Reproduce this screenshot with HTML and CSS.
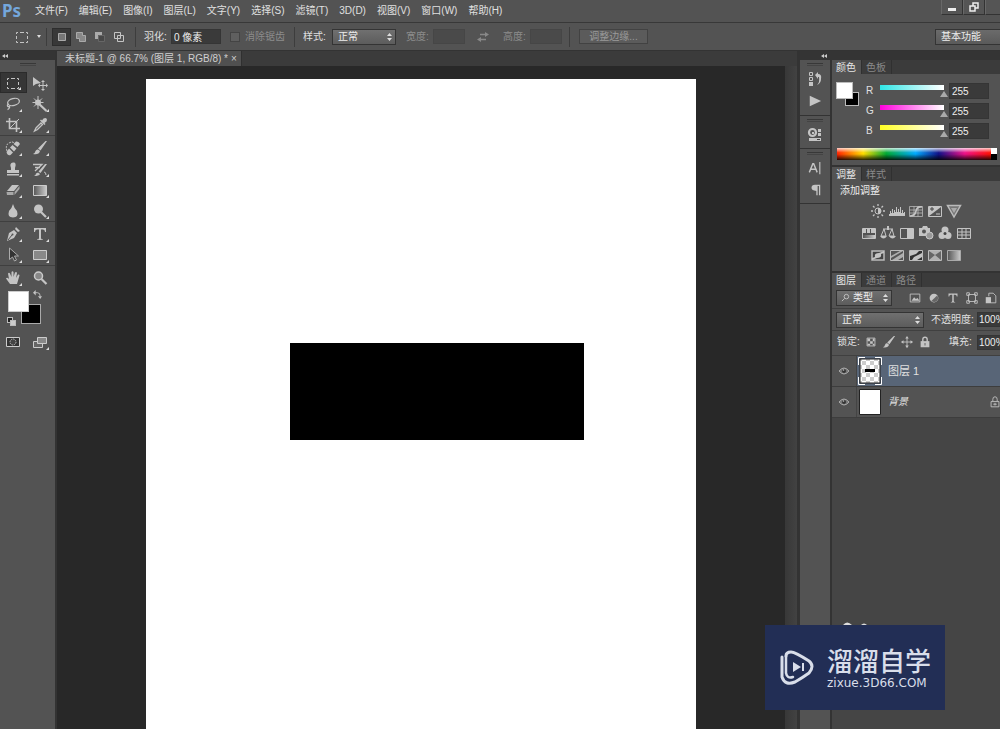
FILE: index.html
```html
<!DOCTYPE html>
<html lang="zh-CN">
<head>
<meta charset="utf-8">
<meta name="viewport" content="width=device-width, initial-scale=1">
<title>未标题-1</title>
<link rel="stylesheet" href="styles.css">
</head>
<body>
<svg class="sprite" aria-hidden="true">
  <defs>
    <linearGradient id="fadeBack"><stop offset="0" stop-color="#555"/><stop offset="1" stop-color="#ccc"/></linearGradient>
    <pattern id="checker" width="8" height="8" patternUnits="userSpaceOnUse"><path fill="#fff" d="M0 0h8v8H0z"/><path fill="#ccc" d="M0 0h4v4H0zM4 4h4v4H4z"/></pattern>
  </defs>
  <symbol id="corner" viewBox="0 0 4 4"><path fill="#ddd" d="M4 0v4H0z"/></symbol>
  <symbol id="updown" viewBox="0 0 5 8"><path d="M2.500 0 5 3H0zM0 5h5L2.500 8z" fill="#ddd"/></symbol>
  <symbol id="marquee" viewBox="0 0 16 16"><path d="M2.500 5V3.500H4M6 3.500h4M12 3.500h1.500V5M13.500 7v3M13.500 12v1.500H12M10 13.500H6M4 13.500H2.500V12M2.500 10V7" class="ln"/></symbol>
  <symbol id="move" viewBox="0 0 16 16"><path d="M1 2v9l3-2 5-1z"/><path d="M11 6.500v8M7 10.500h8" class="ln"/><path d="m11 5 2 2H9zM11 16l2-2H9zM6 10.500l2-2v4zM16 10.500l-2-2v4z"/></symbol>
  <symbol id="lasso" viewBox="0 0 16 16"><ellipse cx="8.500" cy="6" rx="6" ry="3.500" transform="rotate(-14 8.500 6)" class="ln bold"/><path d="M3.500 8c-2 1-1 3 .5 2.500s0 3-1.500 3" class="ln bold"/></symbol>
  <symbol id="wand" viewBox="0 0 16 16"><path d="m6 7 8.500 8" class="ln fat"/><path d="M6 0v13M.5 6.500h11M2 2.500l8 8M10 2.500l-8 8" class="ln"/><circle cx="6" cy="6.500" r="3"/></symbol>
  <symbol id="crop" viewBox="0 0 16 16"><path d="M4.500 1v10.500H15M1 4.500h10.500V15" class="ln two"/><path d="m5 11 9-9" class="ln"/></symbol>
  <symbol id="dropper" viewBox="0 0 16 16"><path d="M2.500 14 4 11l5-5 1.500 1.500-5 5z" class="ln bold"/><path d="m8 3.500 1-1 1 1 1.500-2q2-1 3 0t0 3l-2 1.500 1 1-1 1z"/></symbol>
  <symbol id="heal" viewBox="0 0 16 16"><path d="M8.500 4 11 1.500q3-.5 4 2.500l-2.500 3zM5 7.500 7.500 5l4 3.500-2.500 3zM1.500 12 4 8.500l4 4L5.500 15q-3 1-4-3z"/><path d="M2 11Q0 5 4 3t5 0" class="ln" stroke-dasharray="2 1"/></symbol>
  <symbol id="brush" viewBox="0 0 16 16"><path d="M15 1 8.500 10.500 6 8.500 13.500 1zM8 11q-1 4-7 3 2-.5 2.500-3 1-2 2.500-1.500z"/></symbol>
  <symbol id="stamp" viewBox="0 0 16 16"><path d="M6 7Q4 2 8 1.500T10 7v2h4v3H2V9h4zM2 13h12v1.500H2z"/></symbol>
  <symbol id="history" viewBox="0 0 16 16"><path d="M15 3 8.500 12l-2-1.500L13 3zM8 13q-1 2-6 2 2-1 2-2.500l2-1z"/><path d="M1 3.500h9L3 10M3 6.500h5" class="ln bold"/><path d="M12 11q2 0 2 3" class="ln"/></symbol>
  <symbol id="eraser" viewBox="0 0 16 16"><path d="M7 3h7l-5 6H2z"/><path d="M1.500 10h7v3H2zM9.500 10 14.500 4v3l-5 6z" opacity=".75"/></symbol>
  <symbol id="gradient" viewBox="0 0 16 16"><path d="M1.500 3.500h13v10h-13z" fill="url(#fadeBack)" stroke="#ccc"/></symbol>
  <symbol id="drop" viewBox="0 0 16 16"><path d="M8 1q1 4 4 7 2 6.500-4 6.500T4 8Q7 5 8 1"/></symbol>
  <symbol id="dodge" viewBox="0 0 16 16"><circle cx="6.500" cy="6" r="4.500"/><path d="m9 9 5 5" class="ln fat"/></symbol>
  <symbol id="pen" viewBox="0 0 16 16"><path d="m2 15 2-8 5-3 3 3-3 5zM10 3l1-2 4 4-2 1z"/><path d="m3 14 4-5" stroke="#535353"/><circle cx="7.500" cy="8.500" r="1" fill="#535353"/></symbol>
  <symbol id="type" viewBox="0 0 16 16"><path d="M2 2h12v4h-1q0-2.500-2-2.500H9V12q0 1.500 2 1.500v.5H5v-.5q2 0 2-1.500V3.500H5Q3 3.500 3 6H2z"/></symbol>
  <symbol id="arrow" viewBox="0 0 16 16"><path d="M4.500 1v11.500l3-2.500 2 4 2-1-2-4h4z" fill="#333" stroke="#aaa"/></symbol>
  <symbol id="rect" viewBox="0 0 16 16"><path d="M1.500 3.500h13v9h-13z" fill="#888" stroke="#ccc"/></symbol>
  <symbol id="hand" viewBox="0 0 16 16"><path d="M5 14 1 8.500q1-1.500 3 .5L3 3.500q1-1.500 2 0L6.500 7 6.500 2q1-1.500 2 0V7L10 2.500q1.500-1 2 .5l-1 5 2-3.500q1.500-.5 1.500 1L12 14z"/></symbol>
  <symbol id="zoom" viewBox="0 0 16 16"><circle cx="6.500" cy="6" r="4" fill="#888" stroke="#ccc" stroke-width="1.500"/><path d="m9.500 9 5 5" class="ln fat"/></symbol>
  <symbol id="swap" viewBox="0 0 10 10"><path d="M2 3h3q3 0 3 4" class="ln"/><path d="M0 3l3-3v6zM8 10 5.500 7h4.500z"/></symbol>
  <symbol id="mask" viewBox="0 0 16 16"><path d="M1.500 3.500h13v9h-13z" fill="#333" stroke="#ccc"/><circle cx="8" cy="8" r="3" fill="#444" stroke="#bbb" stroke-dasharray="1.500 .8"/></symbol>
  <symbol id="screens" viewBox="0 0 16 16"><path d="M1.500 7.500h9v6h-9z" fill="#666" stroke="#ccc"/><path d="M5.500 3.500h9v6h-9z" fill="#888" stroke="#ccc"/></symbol>
  <symbol id="selnew" viewBox="0 0 12 12"><path d="M2.500 2.500h7v7h-7z" fill="#777" stroke="#aaa"/></symbol>
  <symbol id="seladd" viewBox="0 0 12 12"><path d="M1.500 1.500h6v3h3v6h-6v-3h-3z" fill="#888" stroke="#aaa"/></symbol>
  <symbol id="selsub" viewBox="0 0 12 12"><path d="M1 8V1h7v3H4v4z" fill="#aaa"/><path d="M4.500 10.500v-6h6v6z" fill="#484848" stroke="#666"/></symbol>
  <symbol id="selint" viewBox="0 0 12 12"><path d="M1.500 1.500h6v6h-6zM4.500 4.500h6v6h-6z" class="ln"/></symbol>
  <symbol id="exchange" viewBox="0 0 12 12"><path d="M3 8.500h6M3 3.500h6" stroke="#888" stroke-width="1.500"/><path d="M8 1v5l4-2.500zM4 6v5L0 8.500z" fill="#888"/></symbol>
  <symbol id="minimize" viewBox="0 0 12 12"><path d="M2 7h8v3H2z" fill="#eee"/></symbol>
  <symbol id="restore" viewBox="0 0 12 12"><path d="M5 5V2h5v5H7M2 5h5v5H2z" fill="none" stroke="#eee" stroke-width="1.500"/></symbol>
  <symbol id="actions" viewBox="0 0 16 16"><path d="M2.500 1.500h3v3h-3zM2.500 6.500h3v3h-3z" class="ln"/><path d="M2 11h4v4H2zM8 4l3-3v2q4 0 3 5 0 4-4 6 3-3 2-8h-1v2z"/></symbol>
  <symbol id="play" viewBox="0 0 16 16"><path d="M2 2v12l13-6z"/></symbol>
  <symbol id="props" viewBox="0 0 16 16"><circle cx="5.500" cy="5.500" r="3.500" class="ln fat"/><path d="M5 5h2v2H5zM11 2h3v3h-3zM11 6h3v3h-3zM2 11h12v3H2z"/><path d="M10 12h3v1h-3z" fill="#444"/></symbol>
  <symbol id="chara" viewBox="0 0 16 16"><path d="m1.500 13 4-10h1l4 10M3 9.500h6" class="ln two"/><path d="M13.500 1v14" class="ln bold"/></symbol>
  <symbol id="para" viewBox="0 0 16 16"><path d="M8 2h6v12h-1.500V3.500H11V14H9.500V9Q4 9 4 5.500T8 2"/></symbol>
  <symbol id="sun" viewBox="0 0 16 16"><circle cx="8" cy="8" r="3" class="ln"/><path d="M8 5a3 3 0 0 1 0 6z"/><path d="M8 1v2M8 13v2M1 8h2M13 8h2M3 3l1.500 1.500M11.500 11.500 13 13M13 3l-1.500 1.500M4.500 11.500 3 13" class="ln bold"/></symbol>
  <symbol id="levels" viewBox="0 0 16 16"><path d="M0 13h16v-4h-1v1h-1V7h-1v3h-1V4h-1v5h-1V6H9v3H8V4H7v5H6V7H5v3H4V6H3v4H2V8H1v3H0z"/></symbol>
  <symbol id="curves" viewBox="0 0 16 16"><path d="M1.500 3.500h13v10h-13zM1.500 7h13M1.500 10h13M6 3.500v10M10 3.500v10" class="ln thin"/><path d="M2 13q5 0 6-5t6-4" class="ln two"/></symbol>
  <symbol id="exposure" viewBox="0 0 16 16"><path d="M1.500 3.500h13v10h-13z" class="ln"/><path d="M2 13V4h12z"/><path d="M3 6h4M5 4v4" stroke="#444"/><path d="M9 11h4" class="ln"/></symbol>
  <symbol id="vibrance" viewBox="0 0 16 16"><path d="M1.500 2.500h13L8 14z" fill="#777" stroke="#bbb" stroke-width="1.500"/><path d="M5 5h6l-3 5z" fill="#aaa"/></symbol>
  <symbol id="hue" viewBox="0 0 16 16"><path d="M1.500 3.500h13v10h-13z" class="ln"/><path d="M2 4h3v4H2zM6 4h3v4H6zM10 4h4v4h-4z"/><path d="M2 10h12v3H2z" fill="url(#fadeBack)"/></symbol>
  <symbol id="balance" viewBox="0 0 16 16"><path d="M3 4h10M4 4l-3 7h5zM12 4l-3 7h5z" class="ln"/><path d="M0 11h7q-3.500 5-7 0M9 11h7q-3.500 5-7 0M7 1h2v4H7z"/></symbol>
  <symbol id="bw" viewBox="0 0 16 16"><path d="M1.500 3.500h13v10h-13z" class="ln"/><path d="M8 4h6v9H8z"/></symbol>
  <symbol id="photo" viewBox="0 0 16 16"><path d="M1 3h3l1-2h4l1 2h2v4q-4 0-4 4H1z"/><circle cx="6" cy="6.500" r="2" fill="#555"/><circle cx="11.500" cy="10.500" r="3.500" fill="#999" stroke="#ccc"/></symbol>
  <symbol id="mixer" viewBox="0 0 16 16"><circle cx="8" cy="5" r="3.500"/><circle cx="5" cy="10.500" r="3.500"/><circle cx="11" cy="10.500" r="3.500"/><circle cx="8" cy="8.500" r="1.500" fill="#444"/></symbol>
  <symbol id="lut" viewBox="0 0 16 16"><path d="M1.500 3.500h13v10h-13zM1.500 7h13M1.500 10h13M6 3.500v10M10 3.500v10" class="ln"/></symbol>
  <symbol id="invert" viewBox="0 0 16 16"><path d="M2 4h12v9H2z" fill="#444" stroke="#bbb" stroke-width="1.500"/><path d="M2 13v-2l3-1q-1-4 4-4l5-2v2l-3 1q1 4-4 4z"/></symbol>
  <symbol id="poster" viewBox="0 0 16 16"><path d="M1.500 3.500h13v10h-13z" fill="#555" stroke="#bbb"/><path d="m2 9 9-5h3L2 11zM3 13l11-7v4l-5 3z" opacity=".8"/></symbol>
  <symbol id="thresh" viewBox="0 0 16 16"><path d="M1.500 3.500h13v10h-13z" fill="#333" stroke="#bbb"/><path d="M2 4h9L8 7 2 9zM4 13l2-3 8-4v4l-5 3z"/></symbol>
  <symbol id="selective" viewBox="0 0 16 16"><path d="M1.500 3.500h13v10h-13z" fill="#666" stroke="#bbb"/><path d="m2 4 6 4 6-4zM2 13l6-5 6 5z" opacity=".8"/></symbol>
  <symbol id="gmap" viewBox="0 0 16 16"><path d="M1.500 3.500h13v10h-13z" fill="url(#fadeBack)" stroke="#aaa"/></symbol>
  <symbol id="find" viewBox="0 0 10 10"><circle cx="6" cy="4" r="2.500" class="ln"/><path d="M4 6 1 9" class="ln"/></symbol>
  <symbol id="image" viewBox="0 0 16 16"><path d="M2.500 3.500h11v9h-11z" class="ln"/><path d="m4 11 3-4 2 2 2-1 2 3z"/></symbol>
  <symbol id="adjust" viewBox="0 0 16 16"><circle cx="8" cy="8" r="5"/><path d="M11.500 5 5 11.500q4 2.500 6.500-.5t0-6" fill="#666"/></symbol>
  <symbol id="shape" viewBox="0 0 16 16"><path d="M4 4h8v8H4zM2 2h3v3H2zM11 2h3v3h-3zM2 11h3v3H2zM11 11h3v3h-3z" class="ln"/></symbol>
  <symbol id="smart" viewBox="0 0 16 16"><path d="M5.500 6V2.500h5l3 3v8H8" class="ln"/><path d="M2 7h6v7H2z"/></symbol>
  <symbol id="pixels" viewBox="0 0 16 16"><path d="M3.500 3.500h9v9h-9z" class="ln"/><path d="M4 4h3v3H4zM10 4h2v3h-2zM7 7h3v3H7zM4 10h3v2H4zM10 10h2v2h-2z"/></symbol>
  <symbol id="position" viewBox="0 0 16 16"><path d="M8 3v10M3 8h10" class="ln"/><path d="m8 1 2 3H6zM8 15l2-3H6zM1 8l3-2v4zM15 8l-3-2v4z"/></symbol>
  <symbol id="lock" viewBox="0 0 16 16"><path d="M5.500 8V5q0-2.500 2.500-2.500T10.500 5v3" class="ln two"/><path d="M3 7h10v7H3z"/><path d="M7.500 9h1v3h-1z" fill="#555"/></symbol>
  <symbol id="lockline" viewBox="0 0 16 16"><path d="M5.500 7V5q0-3 2.500-3t2.500 3v2M3.500 7.500h9v6h-9zM8 9v3M6 10.500h4" class="ln"/></symbol>
  <symbol id="eye" viewBox="0 0 12 12"><path d="M1 6q5-6 10 0-5 6-10 0" fill="#777" stroke="#aaa"/><circle cx="6" cy="6" r="2" fill="#333"/><circle cx="5.500" cy="5" r=".8"/></symbol>
</svg>

<header class="menubar">
  <span class="logo">Ps</span>
  <nav class="menus" aria-label="主菜单">
    <button>文件(F)</button><button>编辑(E)</button><button>图像(I)</button><button>图层(L)</button><button>文字(Y)</button><button>选择(S)</button><button>滤镜(T)</button><button>3D(D)</button><button>视图(V)</button><button>窗口(W)</button><button>帮助(H)</button>
  </nav>
  <div class="window-buttons">
    <button aria-label="最小化"><svg class="i12"><use href="#minimize"/></svg></button>
    <button aria-label="还原"><svg class="i12"><use href="#restore"/></svg></button>
    <button aria-label="关闭"></button>
  </div>
</header>

<section class="options" aria-label="选项">
  <button class="preset" aria-label="矩形选框"><svg class="i16"><use href="#marquee"/></svg><i class="caret"></i></button>
  <div class="modes">
    <button class="on" aria-label="新选区"><svg class="i12"><use href="#selnew"/></svg></button>
    <button aria-label="添加到选区"><svg class="i12"><use href="#seladd"/></svg></button>
    <button aria-label="从选区减去"><svg class="i12"><use href="#selsub"/></svg></button>
    <button aria-label="与选区交叉"><svg class="i12"><use href="#selint"/></svg></button>
  </div>
  <div class="group feather"><label for="feather">羽化:</label><input id="feather" class="field" value="0 像素"></div>
  <label class="check"><input type="checkbox" disabled><span>消除锯齿</span></label>
  <div class="group style"><label for="style">样式:</label>
    <span class="pick"><select id="style"><option>正常</option></select><svg class="ud"><use href="#updown"/></svg></span></div>
  <div class="group dim"><label for="w">宽度:</label><input id="w" class="field" disabled></div>
  <button class="swapwh" aria-label="交换宽度和高度"><svg class="i12"><use href="#exchange"/></svg></button>
  <div class="group dim"><label for="h">高度:</label><input id="h" class="field" disabled></div>
  <div class="refine"><button disabled>调整边缘...</button></div>
  <button class="workspace">基本功能</button>
</section>

<main class="work">
  <aside class="tools">
    <div class="collapse"><i></i><i></i></div>
    <div class="toolbox">
      <div class="grip"></div>
      <div class="tool-group">
        <button class="on" aria-label="矩形选框工具"><svg class="i16"><use href="#marquee"/></svg><svg class="more"><use href="#corner"/></svg></button>
        <button aria-label="移动工具"><svg class="i16"><use href="#move"/></svg></button>
        <button aria-label="套索工具"><svg class="i16"><use href="#lasso"/></svg><svg class="more"><use href="#corner"/></svg></button>
        <button aria-label="魔棒工具"><svg class="i16"><use href="#wand"/></svg><svg class="more"><use href="#corner"/></svg></button>
        <button aria-label="裁剪工具"><svg class="i16"><use href="#crop"/></svg><svg class="more"><use href="#corner"/></svg></button>
        <button aria-label="吸管工具"><svg class="i16"><use href="#dropper"/></svg><svg class="more"><use href="#corner"/></svg></button>
      </div>
      <div class="tool-group">
        <button aria-label="污点修复画笔工具"><svg class="i16"><use href="#heal"/></svg><svg class="more"><use href="#corner"/></svg></button>
        <button aria-label="画笔工具"><svg class="i16"><use href="#brush"/></svg><svg class="more"><use href="#corner"/></svg></button>
        <button aria-label="仿制图章工具"><svg class="i16"><use href="#stamp"/></svg><svg class="more"><use href="#corner"/></svg></button>
        <button aria-label="历史记录画笔工具"><svg class="i16"><use href="#history"/></svg><svg class="more"><use href="#corner"/></svg></button>
        <button aria-label="橡皮擦工具"><svg class="i16"><use href="#eraser"/></svg><svg class="more"><use href="#corner"/></svg></button>
        <button aria-label="渐变工具"><svg class="i16"><use href="#gradient"/></svg><svg class="more"><use href="#corner"/></svg></button>
        <button aria-label="模糊工具"><svg class="i16"><use href="#drop"/></svg><svg class="more"><use href="#corner"/></svg></button>
        <button aria-label="减淡工具"><svg class="i16"><use href="#dodge"/></svg><svg class="more"><use href="#corner"/></svg></button>
      </div>
      <div class="tool-group">
        <button aria-label="钢笔工具"><svg class="i16"><use href="#pen"/></svg><svg class="more"><use href="#corner"/></svg></button>
        <button aria-label="文字工具"><svg class="i16"><use href="#type"/></svg><svg class="more"><use href="#corner"/></svg></button>
        <button aria-label="路径选择工具"><svg class="i16"><use href="#arrow"/></svg><svg class="more"><use href="#corner"/></svg></button>
        <button aria-label="矩形工具"><svg class="i16"><use href="#rect"/></svg><svg class="more"><use href="#corner"/></svg></button>
      </div>
      <div class="tool-group plain">
        <button aria-label="抓手工具"><svg class="i16"><use href="#hand"/></svg><svg class="more"><use href="#corner"/></svg></button>
        <button aria-label="缩放工具"><svg class="i16"><use href="#zoom"/></svg></button>
      </div>
      <div class="swatches">
        <button class="back" aria-label="背景色"></button>
        <button class="fore" aria-label="前景色"></button>
        <button class="reset" aria-label="默认颜色"><i></i><i></i></button>
        <button class="flip" aria-label="切换颜色"><svg><use href="#swap"/></svg></button>
      </div>
      <div class="tool-group plain">
        <button aria-label="快速蒙版"><svg class="i16"><use href="#mask"/></svg></button>
        <button aria-label="屏幕模式"><svg class="i16"><use href="#screens"/></svg><svg class="more"><use href="#corner"/></svg></button>
      </div>
    </div>
  </aside>

  <section class="document">
    <div class="tabs"><div class="doc-tab"><span>未标题-1 @ 66.7% (图层 1, RGB/8) *</span><button aria-label="关闭">×</button></div></div>
    <div class="view">
      <div class="stage"><div class="paper"><div class="block"></div></div></div>
      <div class="scroll"></div>
    </div>
  </section>

  <section class="dock">
    <div class="collapse"><i></i><i></i></div>
    <div class="dock-body">
      <aside class="strip">
        <div class="strip-group first"><div class="grip"></div>
          <button aria-label="历史记录"><svg class="i16"><use href="#actions"/></svg></button>
          <button aria-label="动作"><svg class="i14"><use href="#play"/></svg></button></div>
        <div class="strip-group single"><div class="grip"></div>
          <button aria-label="属性"><svg class="i16"><use href="#props"/></svg></button></div>
        <div class="strip-group"><div class="grip"></div>
          <button aria-label="字符"><svg class="i14"><use href="#chara"/></svg></button>
          <button aria-label="段落"><svg class="i14"><use href="#para"/></svg></button></div>
      </aside>
      <div class="panels">
        <section class="panel color">
          <div class="panel-tabs"><button class="on">颜色</button><button>色板</button></div>
          <div class="color-body">
            <div class="chips"><i class="chip black"></i><i class="chip"></i></div>
            <div class="channels">
              <div class="channel"><label for="r">R</label><input class="red" type="range" max="255" value="255" aria-label="R"><input id="r" class="field" value="255"></div>
              <div class="channel"><label for="g">G</label><input class="green" type="range" max="255" value="255" aria-label="G"><input id="g" class="field" value="255"></div>
              <div class="channel"><label for="b">B</label><input class="blue" type="range" max="255" value="255" aria-label="B"><input id="b" class="field" value="255"></div>
            </div>
          </div>
          <div class="spectrum"><i class="hues"></i><i class="ends"></i></div>
        </section>
        <section class="panel adjust">
          <div class="panel-tabs"><button class="on">调整</button><button>样式</button></div>
          <p>添加调整</p>
          <div class="adjust-row">
            <button aria-label="亮度/对比度"><svg class="i16"><use href="#sun"/></svg></button><button aria-label="色阶"><svg class="i16"><use href="#levels"/></svg></button><button aria-label="曲线"><svg class="i16"><use href="#curves"/></svg></button><button aria-label="曝光度"><svg class="i16"><use href="#exposure"/></svg></button><button aria-label="自然饱和度"><svg class="i16"><use href="#vibrance"/></svg></button>
          </div>
          <div class="adjust-row">
            <button aria-label="色相/饱和度"><svg class="i16"><use href="#hue"/></svg></button><button aria-label="色彩平衡"><svg class="i16"><use href="#balance"/></svg></button><button aria-label="黑白"><svg class="i16"><use href="#bw"/></svg></button><button aria-label="照片滤镜"><svg class="i16"><use href="#photo"/></svg></button><button aria-label="通道混合器"><svg class="i16"><use href="#mixer"/></svg></button><button aria-label="颜色查找"><svg class="i16"><use href="#lut"/></svg></button>
          </div>
          <div class="adjust-row">
            <button aria-label="反相"><svg class="i16"><use href="#invert"/></svg></button><button aria-label="色调分离"><svg class="i16"><use href="#poster"/></svg></button><button aria-label="阈值"><svg class="i16"><use href="#thresh"/></svg></button><button aria-label="可选颜色"><svg class="i16"><use href="#selective"/></svg></button><button aria-label="渐变映射"><svg class="i16"><use href="#gmap"/></svg></button>
          </div>
        </section>
        <section class="panel layers">
          <div class="panel-tabs"><button class="on">图层</button><button>通道</button><button>路径</button></div>
          <div class="layer-row filter">
            <span class="pick kind"><svg class="find"><use href="#find"/></svg><select aria-label="筛选"><option>类型</option></select><svg class="ud"><use href="#updown"/></svg></span>
            <div class="filters">
              <button aria-label="像素图层"><svg class="i14"><use href="#image"/></svg></button><button aria-label="调整图层"><svg class="i14"><use href="#adjust"/></svg></button><button aria-label="文字图层"><svg class="i12"><use href="#type"/></svg></button><button aria-label="形状图层"><svg class="i14"><use href="#shape"/></svg></button><button aria-label="智能对象"><svg class="i14"><use href="#smart"/></svg></button>
            </div>
          </div>
          <div class="layer-row blend">
            <span class="pick"><select aria-label="混合模式"><option>正常</option></select><svg class="ud"><use href="#updown"/></svg></span>
            <label for="opacity">不透明度:</label><input id="opacity" class="field" value="100%">
          </div>
          <div class="layer-row locks">
            <span class="lock-label">锁定:</span>
            <div class="lock-buttons">
              <button aria-label="锁定透明像素"><svg class="i14"><use href="#pixels"/></svg></button><button aria-label="锁定图像像素"><svg class="i14"><use href="#brush"/></svg></button><button aria-label="锁定位置"><svg class="i14"><use href="#position"/></svg></button><button aria-label="锁定全部"><svg class="i14"><use href="#lock"/></svg></button>
            </div>
            <label for="fill">填充:</label><input id="fill" class="field" value="100%">
          </div>
          <div class="layer on">
            <button class="see" aria-label="显示图层"><svg class="i12"><use href="#eye"/></svg></button>
            <svg class="thumb" viewBox="0 0 24 28"><path d="M2 2h20v24H2z" fill="url(#checker)" stroke="#222"/><path d="M7 12h10v3H7z" fill="#000"/><path d="M.5 8V.5H7M17 .5h6.500V8M23.500 20v7.500H17M7 27.500H.5V20" fill="none" stroke="#fff"/></svg>
            <span>图层 1</span>
          </div>
          <div class="layer">
            <button class="see" aria-label="显示图层"><svg class="i12"><use href="#eye"/></svg></button>
            <svg class="thumb" viewBox="0 0 24 28"><path d="M1.500 1.500h21v25h-21z" fill="#fff" stroke="#222"/></svg>
            <em>背景</em>
            <svg class="i14 locked"><use href="#lockline"/></svg>
          </div>
        </section>
      </div>
    </div>
  </section>
</main>

<div class="watermark">
  <svg class="peek" viewBox="0 0 26 3"><path d="M0 3q4-5 9 0zM18 3q3-3 6 0z"/></svg>
  <svg class="mark" viewBox="0 0 36 38"><path d="M7 7q0-4 5-4 4 0 18 9 6 5 0 12-7 5-14 9-10 4-13-5V8" fill="none" stroke="#d9deea" stroke-width="3" stroke-linecap="round"/><path d="M14 28q-6 2-7-4V7" fill="none" stroke="#d9deea" stroke-width="2.500" stroke-linecap="round"/><path d="M14 13v10l8-5zM23 14h2v8h-2z" fill="#d9deea"/></svg>
  <div class="brand"><strong>溜溜自学</strong><small>zixue.3D66.COM</small></div>
</div>
</body>
</html>
```
FILE: styles.css
```css
* { box-sizing: border-box; }
html, body { height: 100%; }
body {
  margin: 0;
  display: flex;
  flex-direction: column;
  overflow: hidden;
  background: #535353;
  color: #e0e0e0;
  font: 10px/14px "Liberation Sans", "Noto Sans CJK SC", sans-serif;
}
button, input, select { font: inherit; color: inherit; margin: 0; padding: 0; border: 0; background: none; border-radius: 0; }
button { display: flex; align-items: center; justify-content: center; white-space: nowrap; }
svg { display: block; flex: none; fill: #c4c4c4; }
.sprite { position: absolute; width: 0; height: 0; }
.ln { fill: none; stroke: #c4c4c4; stroke-width: 1; }
.thin { stroke-width: 0.7; }
.bold { stroke-width: 1.3; }
.two { stroke-width: 1.6; }
.fat { stroke-width: 2.2; }
.i16 { width: 16px; height: 16px; }
.i14 { width: 14px; height: 14px; }
.i12 { width: 12px; height: 12px; }
label, span { white-space: nowrap; }
.field { height: 15px; background: #3a3a3a; color: #eee; padding-left: 2px; min-width: 0; border: 1px solid #353535; }
.field:disabled { background: #4a4a4a; border-color: #464646; }

.menubar { display: flex; height: 23px; flex: none; border-bottom: 1px solid #383838; align-items: flex-start; }
.logo { width: 29px; padding-left: 2px; color: #74a7dc; font: bold 17px/22px "Noto Sans", sans-serif; }
.menus { display: flex; flex: 1; gap: 11px; height: 22px; padding-left: 6px; }
.window-buttons { display: flex; width: 59px; overflow: hidden; }
.window-buttons button { width: 22px; height: 15px; flex: none; border: 1px solid #333; border-top: 0; border-left-color: #686868; background: #555; }

.options { display: flex; align-items: center; height: 28px; flex: none; border-bottom: 1px solid #333; padding-left: 14px; overflow: hidden; }
.preset { width: 34px; height: 20px; justify-content: space-between; padding-right: 7px; }
.caret { border: 2px solid transparent; border-top: 3px solid #ddd; border-bottom: 0; }
.modes { display: flex; border-left: 1px solid #3d3d3d; margin-left: -2px; padding-left: 5px; }
.modes button { width: 19px; height: 18px; }
.modes .on { background: #383838; border: 1px solid #2d2d2d; }
.group { display: flex; align-items: center; height: 20px; }
.group label { width: 27px; }
.feather { border-left: 1px solid #3d3d3d; margin-left: 7px; padding-left: 8px; }
.feather .field { width: 50px; }
.check { display: flex; align-items: center; gap: 5px; width: 64px; margin-left: 9px; color: #8c8c8c; }
.check input { appearance: none; width: 10px; height: 10px; background: #5f5f5f; border: 1px solid #444; }
.style { border-left: 1px solid #3d3d3d; padding-left: 8px; }
.style label { width: 29px; }
.pick { position: relative; display: flex; align-items: center; height: 16px; background: linear-gradient(#707070, #5c5c5c); border: 1px solid #343434; }
.pick select { appearance: none; width: 100%; height: 14px; padding-left: 5px; color: #eee; }
.pick .ud { position: absolute; right: 3px; width: 5px; height: 8px; }
.style .pick { width: 64px; }
.dim { color: #8c8c8c; margin-left: 10px; }
.dim .field { width: 32px; }
.swapwh { width: 28px; height: 18px; margin-left: 4px; }
.swapwh + .dim { margin-left: 6px; }
.refine { border-left: 1px solid #3d3d3d; margin-left: 7px; padding-left: 9px; height: 20px; display: flex; align-items: center; }
.refine button { width: 69px; height: 15px; border: 1px solid #424242; background: #5b5b5b; color: #999; }
.workspace { width: 65px; height: 16px; margin-left: auto; justify-content: flex-start; padding-left: 5px; background: linear-gradient(#6b6b6b, #5a5a5a); border: 1px solid #343434; border-right: 0; color: #eee; }

.work { display: flex; flex: 1; min-height: 0; background: #333; }
.collapse { display: flex; height: 9px; align-items: center; background: #343434; }
.collapse i { border: 2px solid transparent; border-right: 3px solid #ccc; border-left: 0; }
.tools { display: flex; flex-direction: column; width: 55px; margin-right: 2px; }
.tools .collapse { padding-left: 2px; }
.toolbox { flex: 1; background: #535353; }
.grip { width: 16px; height: 3px; margin: 0 auto; border-top: 1px solid #383838; border-bottom: 1px solid #444; }
.toolbox .grip { margin: 3px auto 6px; }
.tool-group { display: grid; grid-template-columns: 27px 27px; border-bottom: 1px solid #3f3f3f; margin-bottom: 1px; }
.tool-group button { position: relative; height: 21px; padding-right: 2px; }
.tool-group .on { background: #363636; border: 1px solid #2b2b2b; }
.more { position: absolute; right: 5px; bottom: 2px; width: 3px; height: 3px; }
.plain { border: 0; }
.swatches { position: relative; height: 42px; }
.swatches button { position: absolute; }
.fore { left: 8px; top: 2px; width: 21px; height: 21px; background: #fff; border: 1px solid #ccc; }
.back { left: 21px; top: 15px; width: 20px; height: 20px; background: #000; border: 1px solid #aaa; }
.reset { left: 7px; top: 28px; width: 9px; height: 9px; }
.reset i { position: absolute; width: 6px; height: 6px; background: #222; border: 1px solid #bbb; left: 0; top: 0; }
.reset i + i { left: 3px; top: 3px; background: #ccc; }
.flip { left: 33px; top: 1px; }
.flip svg { width: 9px; height: 9px; }

.document { display: flex; flex: 1; flex-direction: column; min-width: 0; margin-right: 3px; }
.tabs { display: flex; height: 15px; background: #3b3b3b; }
.doc-tab { display: flex; align-items: center; gap: 3px; padding: 0 4px 0 8px; background: #505050; color: #cfcfcf; border-right: 1px solid #303030; }
.doc-tab button { color: #ccc; }
.view { display: flex; flex: 1; min-height: 0; }
.stage { flex: 1; background: #282828; padding: 13px 12% 0; overflow: hidden; }
.paper { height: 100%; background: #fff; padding: 264px 112px 0 144px; }
.block { height: 97px; background: #000; }
.scroll { width: 12px; background: linear-gradient(90deg, #383838, #424242); }

.dock { width: 200px; display: flex; flex-direction: column; overflow: hidden; }
.dock .collapse { padding-left: 21px; }
.dock-body { display: flex; flex: 1; min-height: 0; }
.strip { width: 30px; margin-right: 2px; background: #535353; }
.strip-group { display: flex; flex-direction: column; align-items: center; padding-top: 3px; border-bottom: 1px solid #333; height: 55px; }
.strip-group.first { height: 56px; }
.strip-group.single { height: 33px; }
.strip .grip { margin: 0 auto 2px; }
.strip-group button { height: 22px; }
.panels { display: flex; flex: 1; min-width: 0; flex-direction: column; background: #454545; }
.panel { background: #535353; overflow: hidden; flex: none; }
.color, .adjust { border-bottom: 2px solid #333; }
.panel-tabs { display: flex; height: 14px; background: #3b3b3b; }
.panel-tabs button { padding: 2px 2px 0 1px; width: 30px; color: #8a8a8a; border-right: 1px solid #303030; }
.panel-tabs .on { background: #535353; color: #e6e6e6; }
.color { height: 107px; }
.color-body { display: flex; padding: 7px 0 0 4px; height: 74px; }
.chips { position: relative; width: 30px; }
.chip { position: absolute; left: 0; top: 1px; width: 17px; height: 17px; background: #fff; border: 1px solid #bbb; }
.chip.black { left: 9px; top: 11px; width: 14px; height: 14px; background: #000; }
.channel { display: flex; align-items: center; height: 20px; }
.channel label { width: 10px; }
.channel .field { width: 40px; height: 16px; margin-left: 1px; }
.channel input[type=range] { appearance: none; width: 72px; height: 12px; background-position: 4px 0; background-size: 64px 5px; background-repeat: no-repeat; }
.red { background-image: linear-gradient(90deg, #2fe6e6, #fff); }
.green { background-image: linear-gradient(90deg, #f0d, #fff); }
.blue { background-image: linear-gradient(90deg, #ff2, #fff); }
input[type=range]::-webkit-slider-runnable-track { height: 12px; }
input[type=range]::-webkit-slider-thumb { appearance: none; width: 8px; height: 6px; margin-top: 6px; background: #aaa; clip-path: polygon(50% 0, 100% 100%, 0 100%); }
.spectrum { display: flex; height: 12px; margin: 0 3px 0 5px; }
.hues { flex: 1; background: linear-gradient(rgba(255,255,255,.8), transparent 40%, transparent 50%, rgba(0,0,0,.85)), linear-gradient(90deg, #f20, #fd0 17%, #0a3 32%, #0af 51%, #118 66%, #e18 83%, #f10); }
.ends { width: 6px; background: linear-gradient(#fff 50%, #000 50%); }
.adjust { height: 106px; }
.adjust p { margin: 3px 0 2px 8px; color: #eee; }
.adjust-row { display: flex; justify-content: center; gap: 3px; height: 22px; }

.layer-row { display: flex; align-items: center; height: 22px; padding-left: 4px; border-bottom: 1px solid #404040; }
.kind { width: 56px; }
.kind .find { width: 9px; height: 9px; margin-left: 4px; }
.kind select { padding-left: 3px; }
.filters { display: flex; flex: none; margin-left: 13px; }
.filters button { width: 19px; }
.blend .pick { width: 88px; flex: none; margin-right: 7px; }
.layer-row .field { width: 40px; flex: none; padding-left: 1px; }
.blend label { width: 46px; flex: none; }
.locks { height: 25px; padding-bottom: 2px; }
.lock-label { width: 26px; padding-left: 1px; flex: none; }
.lock-buttons { display: flex; flex: none; width: 87px; }
.lock-buttons button { width: 18px; }
.locks label { width: 28px; flex: none; }
.layer { display: flex; align-items: center; height: 31px; border-bottom: 1px solid #3d3d3d; font-size: 11px; }
.see { width: 25px; height: 30px; border-right: 1px solid #444; background: #535353; }
.thumb { width: 24px; height: 28px; margin-right: 6px; margin-left: 1px; }
.layer.on { background: #586577; }
.layer em { font-size: 10px; }
.layer .locked { margin-left: auto; margin-right: -2px; }

.watermark { position: absolute; right: 55px; bottom: 19px; display: flex; align-items: center; gap: 12px; width: 180px; height: 85px; padding-left: 14px; background: #222e55; color: #d9deea; }
.mark { width: 36px; height: 38px; }
.peek { position: absolute; left: 78px; top: -3px; width: 26px; height: 3px; fill: #ddd; }
.brand { display: flex; flex-direction: column; gap: 3px; }
.brand strong { font: 500 26px/28px "Noto Sans CJK SC", sans-serif; }
.brand small { font: 12px/13px "DejaVu Sans", sans-serif; }
```
